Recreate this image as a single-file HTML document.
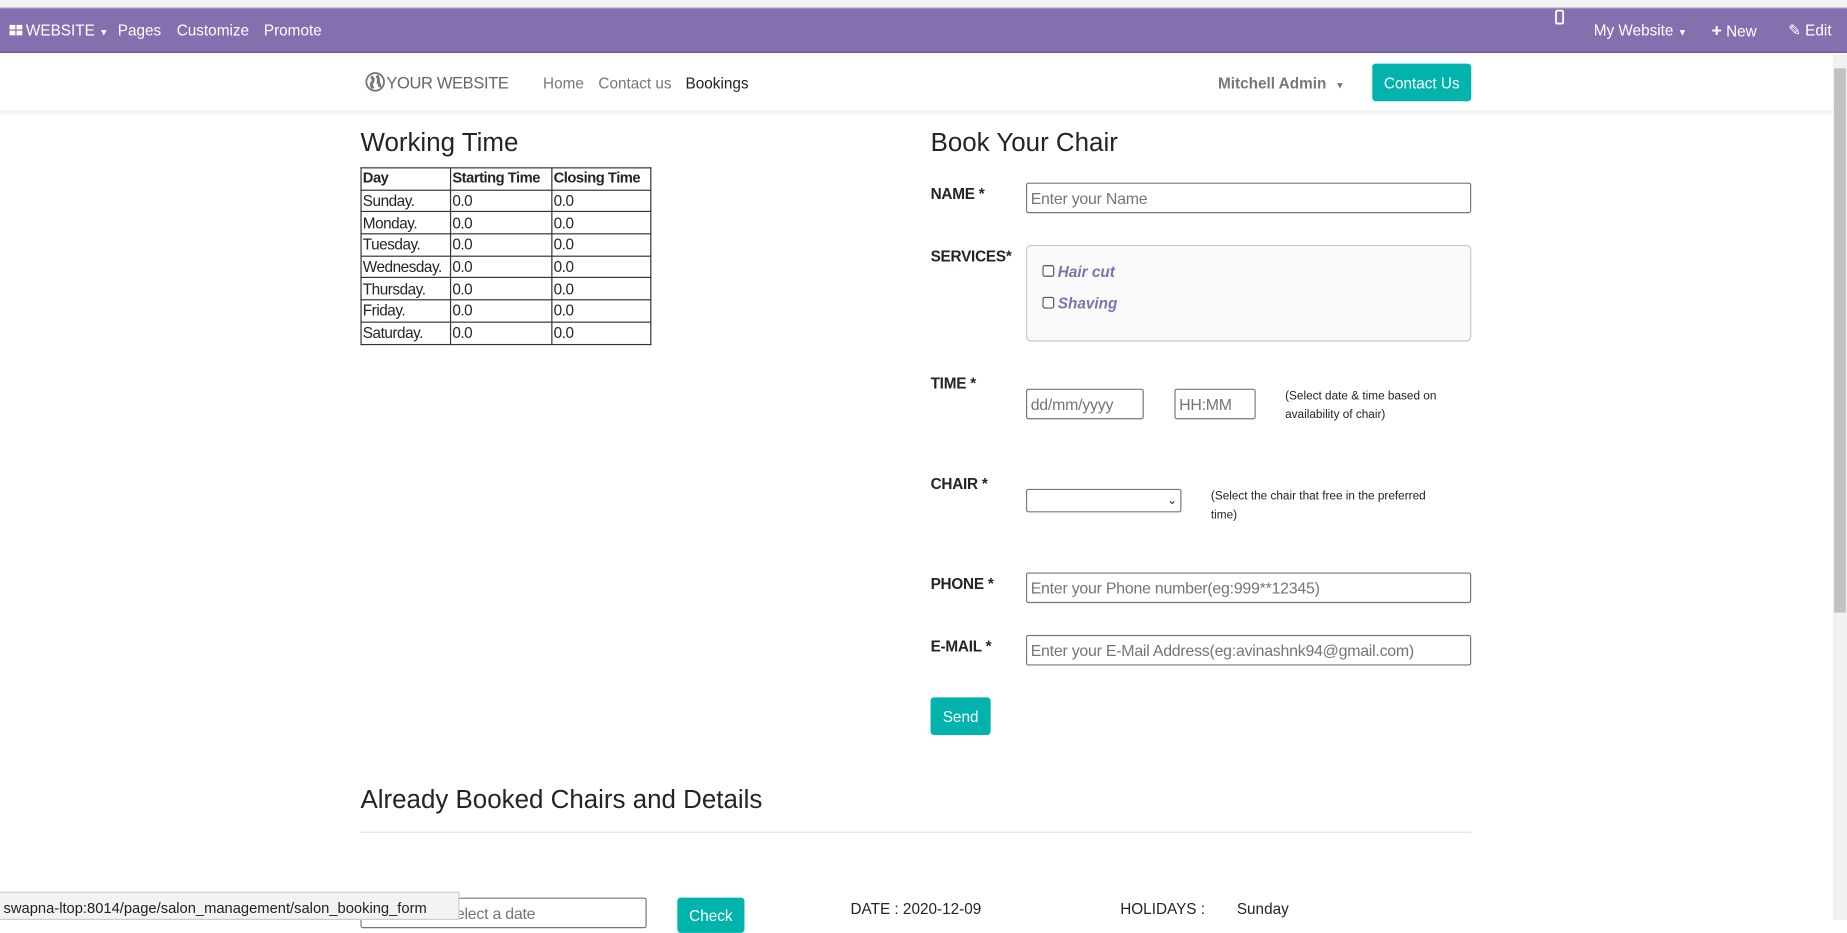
<!DOCTYPE html>
<html><head><meta charset="utf-8"><style>
*{box-sizing:border-box;margin:0;padding:0}
html,body{width:1847px;height:920px;overflow:hidden;background:#fff}
#s{position:absolute;left:0;top:0;width:1568px;height:781px;transform:scale(1.17793);transform-origin:0 0;font-family:"Liberation Sans",sans-serif;color:#212529}
.a{position:absolute;white-space:nowrap}
.w{color:#fff;font-size:13px}
.lbl{font-weight:bold;font-size:13px;color:#212529;letter-spacing:-0.2px}
.inp{position:absolute;border:1px solid #767676;border-radius:2px;background:#fff;font-size:13.5px;color:#757575;padding:0 3px;display:flex;align-items:center;white-space:nowrap;overflow:hidden;letter-spacing:-0.2px}
.note{font-size:10px;line-height:16px;color:#222}
table{border-collapse:collapse;font-size:13px;position:absolute;left:306px;top:142px;table-layout:fixed;width:246px;letter-spacing:-0.4px}
td,th{border:1px solid #333;height:18.7px;padding:0 1px;line-height:17px;white-space:nowrap;overflow:hidden}
th{text-align:left;font-size:12.5px}
.btn{position:absolute;background:#00b3ac;color:#fff;border-radius:3px;font-size:13px;display:flex;align-items:center;justify-content:center}
.cb{position:absolute;width:10px;height:10px;border:1px solid #555;border-radius:2px;background:#fff}
.svc{position:absolute;font-style:italic;font-weight:bold;color:#8470ae;font-size:13px}
h{position:absolute;font-size:22px;white-space:nowrap;color:#212529}
</style></head><body><div id="s">
<div class="a" style="left:0;top:0;width:1568px;height:7px;background:#f2f2f2;border-bottom:1px solid #c8c8c8"></div>
<div class="a" style="left:0;top:7px;width:1568px;height:38px;background:#8470ae;border-bottom:1px solid #6d5a98"></div>
<svg class="a" style="left:8px;top:21px" width="11" height="10"><rect x="0" y="0" width="5" height="4" fill="#fff"/><rect x="6" y="0" width="5" height="4" fill="#fff"/><rect x="0" y="5" width="5" height="4" fill="#fff"/><rect x="6" y="5" width="5" height="4" fill="#fff"/></svg>
<div class="a w" style="left:22px;top:18px">WEBSITE <span style="font-size:8px">▼</span></div>
<div class="a w" style="left:100px;top:18px">Pages</div>
<div class="a w" style="left:150px;top:18px">Customize</div>
<div class="a w" style="left:224px;top:18px">Promote</div>
<svg class="a" style="left:1320px;top:8px" width="8" height="13"><rect x="1" y="1" width="6" height="11" rx="1" fill="none" stroke="#fff" stroke-width="1.5"/></svg>
<div class="a w" style="left:1353px;top:18px">My Website <span style="font-size:8px">▼</span></div>
<div class="a w" style="left:1453px;top:18px"><b style="font-size:15px">+</b> New</div>
<div class="a w" style="left:1518px;top:18px">✎ Edit</div>

<div class="a" style="left:0;top:46px;width:1556px;height:48px;background:#fff;box-shadow:0 2px 3px rgba(0,0,0,.08)"></div>
<svg class="a" style="left:310px;top:61px" width="17" height="17"><circle cx="8.5" cy="8.5" r="7.5" fill="none" stroke="#777" stroke-width="1.6"/><path d="M5 4 Q8 6 6 9 Q4 11 7 14 M10 3 Q12 6 11 9 Q13 11 12 13" stroke="#777" stroke-width="2.5" fill="none"/></svg>
<div class="a" style="left:328px;top:62px;font-size:14px;color:#666;letter-spacing:-0.3px">YOUR WEBSITE</div>
<div class="a" style="left:461px;top:63px;font-size:13px;color:#777">Home</div>
<div class="a" style="left:508px;top:63px;font-size:13px;color:#777">Contact us</div>
<div class="a" style="left:582px;top:63px;font-size:13px;color:#222">Bookings</div>
<div class="a" style="left:1034px;top:63px;font-size:13px;color:#777;font-weight:bold">Mitchell Admin <span style="font-size:8px;margin-left:4px">▼</span></div>
<div class="btn" style="left:1165px;top:54px;width:84px;height:32px;font-size:13px">Contact Us</div>
<div class="a" style="left:1556px;top:46px;width:12px;height:735px;background:#f1f1f1"></div>
<div class="a" style="left:1557px;top:58px;width:10px;height:462px;background:#c1c1c1"></div>

<h style="left:306px;top:108px">Working Time</h>
<table><colgroup><col style="width:76px"><col style="width:86px"><col style="width:84px"></colgroup>
<tr><th>Day</th><th>Starting Time</th><th>Closing Time</th></tr>
<tr><td>Sunday.</td><td>0.0</td><td>0.0</td></tr>
<tr><td>Monday.</td><td>0.0</td><td>0.0</td></tr>
<tr><td>Tuesday.</td><td>0.0</td><td>0.0</td></tr>
<tr><td>Wednesday.</td><td>0.0</td><td>0.0</td></tr>
<tr><td>Thursday.</td><td>0.0</td><td>0.0</td></tr>
<tr><td>Friday.</td><td>0.0</td><td>0.0</td></tr>
<tr><td>Saturday.</td><td>0.0</td><td>0.0</td></tr></table>

<h style="left:790px;top:108px">Book Your Chair</h>
<div class="a lbl" style="left:790px;top:157px">NAME *</div>
<div class="inp" style="left:871px;top:155px;width:378px;height:26px">Enter your Name</div>
<div class="a lbl" style="left:790px;top:210px">SERVICES*</div>
<div class="a" style="left:871px;top:208px;width:378px;height:82px;background:#fafafa;border:1px solid #c8c8c8;border-radius:4px"></div>
<div class="cb" style="left:885px;top:225px"></div><div class="svc" style="left:898px;top:223px">Hair cut</div>
<div class="cb" style="left:885px;top:252px"></div><div class="svc" style="left:898px;top:250px">Shaving</div>
<div class="a lbl" style="left:790px;top:318px">TIME *</div>
<div class="inp" style="left:871px;top:330px;width:100px;height:26px">dd/mm/yyyy</div>
<div class="inp" style="left:997px;top:330px;width:69px;height:26px">HH:MM</div>
<div class="a note" style="left:1091px;top:329px">(Select date &amp; time based on<br>availability of chair)</div>
<div class="a lbl" style="left:790px;top:403px">CHAIR *</div>
<div class="inp" style="left:871px;top:415px;width:132px;height:20px;justify-content:flex-end;color:#222;font-size:10px">⌄</div>
<div class="a note" style="left:1028px;top:414px">(Select the chair that free in the preferred<br>time)</div>
<div class="a lbl" style="left:790px;top:488px">PHONE *</div>
<div class="inp" style="left:871px;top:486px;width:378px;height:26px">Enter your Phone number(eg:999**12345)</div>
<div class="a lbl" style="left:790px;top:541px">E-MAIL *</div>
<div class="inp" style="left:871px;top:539px;width:378px;height:26px">Enter your E-Mail Address(eg:avinashnk94@gmail.com)</div>
<div class="btn" style="left:790px;top:592px;width:51px;height:32px">Send</div>

<h style="left:306px;top:666px">Already Booked Chairs and Details</h>
<div class="a" style="left:306px;top:706px;width:943px;height:1px;background:#e5e5e5"></div>
<div class="inp" style="left:306px;top:762px;width:243px;height:26px;padding-left:80px">elect a date</div>
<div class="btn" style="left:575px;top:762px;width:57px;height:30px;align-items:flex-start;padding-top:8px">Check</div>
<div class="a" style="left:722px;top:764px;font-size:13px">DATE : 2020-12-09</div>
<div class="a" style="left:951px;top:764px;font-size:13px">HOLIDAYS :</div>
<div class="a" style="left:1050px;top:764px;font-size:13px">Sunday</div>
<div class="a" style="left:0;top:757px;width:390px;height:24px;background:#f3f3f3;border:1px solid #ccc;border-left:0;font-size:12.5px;color:#222;padding:6px 0 0 3px">swapna-ltop:8014/page/salon_management/salon_booking_form</div>
</div></body></html>
